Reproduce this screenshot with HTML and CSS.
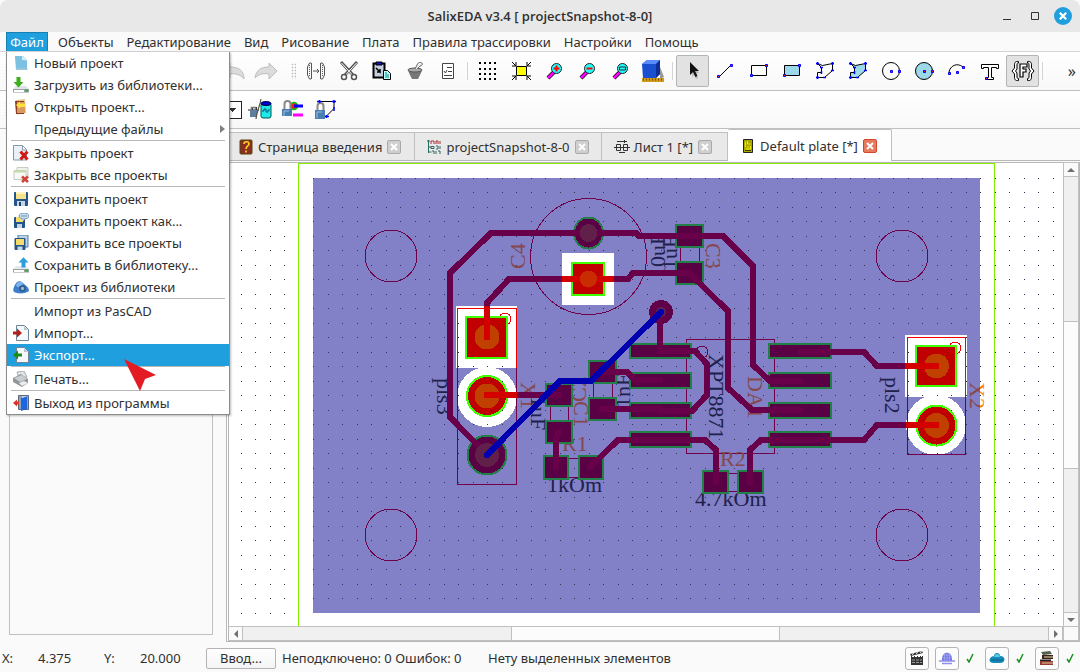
FILE: index.html
```html
<!DOCTYPE html>
<html lang="ru">
<head>
<meta charset="utf-8">
<title>SalixEDA</title>
<link rel="stylesheet" href="styles.css">
</head>
<body>
<div class="window">
  <header class="titlebar">
    <h1 class="title">SalixEDA v3.4 [ projectSnapshot-8-0]</h1>
    <div class="window-buttons">
      <button class="winbtn" aria-label="Свернуть"><svg width="18" height="18"><path d="M5 12.5h8" stroke="#333" stroke-width="1"/></svg></button>
      <button class="winbtn" aria-label="Развернуть"><svg width="18" height="18"><path d="M5.5 5.500h7v7h-7z" fill="none" stroke="#333"/></svg></button>
      <button class="winbtn" aria-label="Закрыть"><svg width="18" height="18"><circle cx="9" cy="9" r="9" fill="#209fdf"/><path d="M5.800 5.800l6.400 6.400M12.200 5.800l-6.400 6.400" stroke="#fff" stroke-width="2.200"/></svg></button>
    </div>
  </header>

  <nav class="menubar">
    <div class="menu-holder">
      <button class="menu-title open">Файл</button>
      <div class="dropdown">
        <button class="item"><svg class="ico" viewBox="0 0 16 16"><path d="M2 1h8l4 4v9H4z" fill="#9fd0ea"/><path d="M2 1h7v4l5 1v9H3z" fill="#7cc0e2"/><path d="M9 1v4h5z" fill="#d6eefa"/><path d="M3 14h12" stroke="#b8cdd8"/></svg><span>Новый проект</span></button>
        <button class="item"><svg class="ico" viewBox="0 0 16 16"><path d="M0 12l3-3h10l3 3v3.500H0z" fill="#dfe3e6"/><path d="M0 12h16v3.500H0z" fill="#9aa2a6"/><path d="M1 13h10v2H1z" fill="#fff"/><path d="M3.500 0h4v5h3L5.500 10.500.500 5h3z" fill="#3fae1c"/><path d="M12 13.500h3" stroke="#34b32a" stroke-width="2"/></svg><span>Загрузить из библиотеки...</span></button>
        <button class="item"><svg class="ico" viewBox="0 0 16 16"><path d="M3 1l9-1 1 14-9 1.500z" fill="#e6c78e"/><path d="M2 2h9v13H3z" fill="#8b3a26"/><path d="M4 3h8v11H4z" fill="#d99a5a"/><path d="M3 6l4-3.500v2h5v3.500H7v2z" fill="#ffe03a"/></svg><span>Открыть проект...</span></button>
        <button class="item"><span class="ico"></span><span>Предыдущие файлы</span><svg class="sub" viewBox="0 0 5 8"><path d="M0 0l5 4-5 4z" fill="#808080"/></svg></button>
        <hr>
        <button class="item"><svg class="ico" viewBox="0 0 16 16"><path d="M.5.5h9l4 4v10.500H.5z" fill="#e9f0f7" stroke="#8397ab"/><path d="M9.500 1v4h4" fill="#fff" stroke="#8397ab"/><path d="M7.500 6.500l7 8M14.500 6.500l-7 8" stroke="#d31b14" stroke-width="3"/></svg><span>Закрыть проект</span></button>
        <button class="item"><svg class="ico" viewBox="0 0 16 16"><path d="M4 .5h11v10H4z" fill="#eef2ea" stroke="#c4cbbf"/><path d="M1 3.500h12v9H1z" fill="#f8f8f4" stroke="#c6cbc0"/><path d="M1 3.500h12v2H1z" fill="#c5dca8"/><path d="M9 9.500l6 5.500M15 9.500l-6 5.500" stroke="#cf4438" stroke-width="2.600"/></svg><span>Закрыть все проекты</span></button>
        <hr>
        <button class="item"><svg class="ico" viewBox="0 0 16 16"><rect x="1" y="1" width="14" height="14" rx="1" fill="#23558c"/><path d="M3 1h10v7H3z" fill="#f6e28a"/><path d="M3 1h10v2H3z" fill="#fff4bf"/><path d="M4 10h8v5H4z" fill="#c9d6e2"/><path d="M6 11h2v4H6z" fill="#1d4472"/></svg><span>Сохранить проект</span></button>
        <button class="item"><svg class="ico" viewBox="0 0 16 16"><rect x="1" y="4" width="11" height="11" rx="1" fill="#23558c"/><path d="M3 4h7v5H3z" fill="#f6dc6a"/><path d="M4 11h5v4H4z" fill="#c9d6e2"/><ellipse cx="11" cy="3" rx="5" ry="3" fill="#c7dff0" stroke="#6d95b5"/><path d="M9 5.500h3l-2 3z" fill="#a9cbe3"/><path d="M8.500 3h5" stroke="#245" stroke-dasharray="1 1"/></svg><span>Сохранить проект как...</span></button>
        <button class="item"><svg class="ico" viewBox="0 0 16 16"><path d="M5 0h10v12H5z" fill="#bcd3e6" stroke="#4d7aa5"/><rect x="1.500" y="3" width="11" height="12" rx="1" fill="#23558c"/><path d="M3 4h8v6H3z" fill="#f6dc6a"/><path d="M4.500 11.500h5V15h-5z" fill="#c9d6e2"/></svg><span>Сохранить все проекты</span></button>
        <button class="item"><svg class="ico" viewBox="0 0 16 16"><path d="M0 12l3-3h10l3 3v3.500H0z" fill="#e6e9eb"/><path d="M0 12h16v3.500H0z" fill="#9aa2a6"/><path d="M1 13h10v2H1z" fill="#fff"/><path d="M8.500 10.500h4v-5h3L10.500.300 5.500 5.500h3z" fill="#2b9fdc"/><path d="M12 13.500h3" stroke="#34b32a" stroke-width="2"/></svg><span>Сохранить в библиотеку...</span></button>
        <button class="item"><svg class="ico" viewBox="0 0 16 16"><path d="M1 8c2-6 6-7 9-4s6 4 6 8c-3 3-12 3-15 1-1-1-1-3 0-5z" fill="#3d7fcb"/><path d="M3 6c2-4 5-4 7-2 1 2-4 4-6 4z" fill="#7fb3ea"/><circle cx="9.500" cy="9.500" r="2.500" fill="#a3b3c4" stroke="#28588f" stroke-width="1.500"/></svg><span>Проект из библиотеки</span></button>
        <hr>
        <button class="item"><span class="ico"></span><span>Импорт из PasCAD</span></button>
        <button class="item"><svg class="ico" viewBox="0 0 16 16"><path d="M3.500.500h8l4 4v11h-12z" fill="#f4f8fb" stroke="#6f8496"/><path d="M11 1v4h4z" fill="#b6c6d4"/><path d="M0 6.500h4v-3L9 8l-5 4.500v-3H0z" fill="#b3221a"/></svg><span>Импорт...</span></button>
        <button class="item selected"><svg class="ico" viewBox="0 0 16 16"><path d="M3.500.500h8l4 4v11h-12z" fill="#f4f8fb" stroke="#6f8496"/><path d="M11 1v4h4z" fill="#b6c6d4"/><path d="M9 6.500H5v-3L0 8l5 4.500v-3h4z" fill="#1d8a1d"/></svg><span>Экспорт...</span></button>
        <hr>
        <button class="item"><svg class="ico" viewBox="0 0 16 16"><path d="M4 1l7-1 3 6-8 2z" fill="#dfe4e8" stroke="#8b9298" stroke-width=".7"/><path d="M0 7l8-4 7 5v4l-6 4-9-5z" fill="#8f9599"/><path d="M1 7l8-3 5 4-7 3z" fill="#c8cdd0"/><path d="M6 12l5-2 4 2-6 3z" fill="#eee"/></svg><span>Печать...</span></button>
        <hr>
        <button class="item"><svg class="ico" viewBox="0 0 16 16"><path d="M5.500.500h10v14h-10z" fill="#8fa3b5" stroke="#56697c"/><path d="M14 1L8 3v13l6-2z" fill="#1d66e0"/><path d="M15 1h-6v2" fill="#cfd9e2"/><path d="M6 6.500H4v-2L0 8l4 3.500v-2h2z" fill="#d8352b"/></svg><span>Выход из программы</span></button>
      </div>
      <svg class="pointer" viewBox="0 0 32 32"><path d="M0 0L32 16 21 20 16 32z" fill="#e31b23"/></svg>
    </div>
    <button class="menu-title">Объекты</button>
    <button class="menu-title">Редактирование</button>
    <button class="menu-title">Вид</button>
    <button class="menu-title">Рисование</button>
    <button class="menu-title">Плата</button>
    <button class="menu-title">Правила трассировки</button>
    <button class="menu-title">Настройки</button>
    <button class="menu-title">Помощь</button>
  </nav>

  <div class="toolbar">
    <span class="grip"></span>
    <div class="tools history">
      <button class="tool" aria-label="Отменить"><svg viewBox="0 0 24 24"><path d="M1 11l8-7v4c8 0 14 3 14 12-3-4-8-6-14-5v4z" fill="#dcdcdc" stroke="#bdbdbd"/></svg></button>
      <button class="tool" aria-label="Повторить"><svg viewBox="0 0 24 24"><path d="M23 12l-8-8v4C7 8 2 11 1 19c4-4 8-5 14-4v5z" fill="#dcdcdc" stroke="#bdbdbd"/></svg></button>
    </div>
    <span class="grip"></span>
    <div class="tools edit">
      <button class="tool" aria-label="Зеркало"><svg viewBox="0 0 24 24"><path d="M7.500 4v16M16.500 4v16M7 4H5.500L3.500 8v8l2 4H7M17 4h1.500l2 4v8l-2 4H17M9 12h6M13 10l2 2-2 2" fill="none" stroke="#555"/><path d="M5.500 6v12M18.500 6v12" stroke="#555" stroke-dasharray="1 1"/></svg></button>
      <button class="tool" aria-label="Вырезать"><svg viewBox="0 0 24 24"><path d="M4 3l12 13M20 3L8 16" stroke="#555" stroke-width="3"/><path d="M4.500 4l11 12M19.500 4l-11 12" stroke="#fff"/><circle cx="7" cy="18" r="2.500" fill="#fff" stroke="#555" stroke-width="1.500"/><circle cx="17" cy="18" r="2.500" fill="#fff" stroke="#555" stroke-width="1.500"/></svg></button>
      <button class="tool" aria-label="Вставить"><svg viewBox="0 0 24 24"><path d="M3.500 4.500h11v14h-11z" fill="#c3cede" stroke="#000" stroke-width="2"/><path d="M6 3h6v3H6z" fill="#1414b4" stroke="#000"/><path d="M6 9l4 4v-3m0 3H7" stroke="#000" stroke-width="1.500" fill="none"/><path d="M13.500 11.500h4l3 3v6h-7z" fill="#bff" stroke="#000"/><path d="M15 14h2M15 16h4M15 18h4" stroke="#088"/></svg></button>
      <button class="tool" aria-label="Очистить"><svg viewBox="0 0 24 24"><path d="M5 11h14l-1 3-3 6H9l-3-6z" fill="#777"/><ellipse cx="12" cy="11" rx="7" ry="2" fill="#aaa" stroke="#555"/><path d="M12 10l2-4c1-3 4-3 5-2s0 3-2 3l-3 3" fill="#eee" stroke="#666"/></svg></button>
      <button class="tool" aria-label="Проверка"><svg viewBox="0 0 24 24"><path d="M6.500 4.500h11v15h-11z" fill="#fff" stroke="#444"/><path d="M11 8.500h5M8 12l1.500 2L11 11M12 12.500h4M8 16.500h8" stroke="#444" fill="none"/></svg></button>
    </div>
    <span class="divider"></span>
    <div class="tools">
      <button class="tool" aria-label="Сетка"><svg viewBox="0 0 24 24"><path d="M3 4h18M3 10h18M3 15h18M3 20h18" stroke="#000" stroke-width="2" stroke-dasharray="2 3"/></svg></button>
      <button class="tool" aria-label="Вписать"><svg viewBox="0 0 24 24"><path d="M7.500 7.500h10v9h-10z" fill="#ff0" stroke="#000"/><path d="M3 3l4 4M22 3l-4 4M3 21l4-4M22 21l-4-4M7 3v4H3M18 3v4h4M7 21v-4H3M18 21v-4h4" stroke="#000" fill="none"/></svg></button>
      <button class="tool" aria-label="Увеличить"><svg viewBox="0 0 24 24"><path d="M12 13l-6 6" stroke="#000" stroke-width="4"/><path d="M12 13l-6 6" stroke="#f0f" stroke-width="2.600"/><circle cx="14.500" cy="9.500" r="5" fill="#2ff" stroke="#222"/><path d="M14.500 6.500v6M11.500 9.500h6" stroke="#f00" stroke-width="2"/></svg></button>
      <button class="tool" aria-label="Уменьшить"><svg viewBox="0 0 24 24"><path d="M12 13l-6 6" stroke="#000" stroke-width="4"/><path d="M12 13l-6 6" stroke="#f0f" stroke-width="2.600"/><circle cx="14.500" cy="9.500" r="5" fill="#2ff" stroke="#222"/><path d="M11.500 9.500h6" stroke="#f00" stroke-width="2"/></svg></button>
      <button class="tool" aria-label="Окно"><svg viewBox="0 0 24 24"><path d="M12 13l-6 6" stroke="#000" stroke-width="4"/><path d="M12 13l-6 6" stroke="#f0f" stroke-width="2.600"/><circle cx="14.500" cy="9.500" r="5" fill="#2ff" stroke="#222"/><path d="M11.500 8h6v3h-6z" fill="none" stroke="#222"/></svg></button>
      <button class="tool" aria-label="3D вид"><svg viewBox="0 0 24 24"><path d="M19 8l4 10-4 2z" fill="#999"/><path d="M1 5l5-4h13v14l-4 4H2z" fill="#1a4fd0"/><path d="M1 5l5-4h13l-4 4z" fill="#5b8cff"/><path d="M19 1v14l-4 4V5z" fill="#0c2f95"/><path d="M1 19h22v4H1z" fill="#d29a1c"/><path d="M2 20.500h20" stroke="#7a5200" stroke-width="2" stroke-dasharray="1 2"/></svg></button>
    </div>
    <span class="divider"></span>
    <div class="tools">
      <button class="tool active" aria-label="Выбор"><svg viewBox="0 0 24 24"><path d="M11 6l7 8-3 1 2 4-2 1-2-4-2 2z" fill="#bbb"/><path d="M9 3v13l3-3 2.500 5 2-1-2.500-5h4z" fill="#111"/></svg></button>
      <button class="tool" aria-label="Линия"><svg viewBox="0 0 24 24"><path d="M5 18L17 6" stroke="#000"/><path d="M3.500 16.500h2v2h-2zM16.500 5.500h2v2h-2z" fill="#f22" stroke="#00f"/></svg></button>
      <button class="tool" aria-label="Прямоугольник"><svg viewBox="0 0 24 24"><path d="M4.500 6.500h15v10h-15z" fill="none" stroke="#000"/><path d="M3.500 15.500h2v2h-2zM18.500 5.500h2v2h-2z" fill="#f22" stroke="#00f"/></svg></button>
      <button class="tool" aria-label="Заливка"><svg viewBox="0 0 24 24"><path d="M4.500 6.500h15v10h-15z" fill="#9bd9ea" stroke="#000"/><path d="M3.500 15.500h2v2h-2zM18.500 5.500h2v2h-2z" fill="#f22" stroke="#00f"/></svg></button>
      <button class="tool" aria-label="Полилиния"><svg viewBox="0 0 24 24"><path d="M4.500 4.500l5 2 10-2v7l-8 7h-7v-5h4v-5z" fill="none" stroke="#000"/><path d="M3 4.500h3M4.500 3v3M18 4.500h3M19.500 3v3M18 11.500h3M3 18.500h3M4.500 17v3M10 18.500h3M7 8.500h3M8.500 12v3" stroke="#00f" stroke-width="1.500"/></svg></button>
      <button class="tool" aria-label="Полигон"><svg viewBox="0 0 24 24"><path d="M4.500 4.500l5 2 10-2v7l-8 7h-7v-5h4v-5z" fill="#9bd9ea" stroke="#000"/><path d="M3 4.500h3M4.500 3v3M18 4.500h3M19.500 3v3M18 11.500h3M3 18.500h3M4.500 17v3M10 18.500h3M7 8.500h3M8.500 12v3" stroke="#00f" stroke-width="1.500"/></svg></button>
      <button class="tool" aria-label="Окружность"><svg viewBox="0 0 24 24"><circle cx="12" cy="12" r="8.500" fill="none" stroke="#000"/><path d="M11.500 11.500h2v2h-2zM19.500 11.500h2v2h-2z" fill="#f22" stroke="#00f"/></svg></button>
      <button class="tool" aria-label="Круг"><svg viewBox="0 0 24 24"><circle cx="12" cy="12" r="8.500" fill="#9bd9ea" stroke="#000"/><path d="M11.500 11.500h2v2h-2zM19.500 11.500h2v2h-2z" fill="#f22" stroke="#00f"/></svg></button>
      <button class="tool" aria-label="Дуга"><svg viewBox="0 0 24 24"><path d="M4 13C5 7 12 3 18 8" fill="none" stroke="#000"/><path d="M3.500 13.500h2v2h-2zM11.500 12.500h2v2h-2zM17.500 7.500h2v2h-2z" fill="#f22" stroke="#00f"/></svg></button>
      <button class="tool" aria-label="Текст"><svg viewBox="0 0 24 24"><path d="M3.500 5.500h17v4h-2v-1h-5v10h2v2h-7v-2h2v-10h-5v1h-2z" fill="#fff" stroke="#000"/><path d="M7.500 18.500h2v2h-2z" fill="#f22" stroke="#00f"/></svg></button>
      <button class="tool active" aria-label="Фрагмент"><svg viewBox="0 0 24 24"><path d="M7.500 2.500C4 2 3.500 4 3.500 6v3L1 12l2.500 3v3c0 2 .5 4 4 3.500v-2C6 19.500 6 19 6 17v-3l-1.500-2L6 10V6c0-1.500 0-2 1.500-2zM16.500 2.500C20 2 20.500 4 20.500 6v3l2.500 3-2.500 3v3c0 2-.5 4-4 3.500v-2C18 19.500 18 19 18 17v-3l1.500-2L18 10V6c0-1.500 0-2-1.500-2z" fill="#fff" stroke="#000"/><path d="M9 5h7v3h-4v2h3v3h-3v5H9z" fill="#fff" stroke="#000" stroke-width="1.200"/></svg></button>
    </div>
    <span class="divider"></span>
    <button class="more">»</button>
  </div>

  <div class="toolbar second">
    <span class="grip"></span>
    <select class="layer" aria-label="Слой"><option></option></select>
    <button class="tool" aria-label="Блокировка деталей"><svg viewBox="0 0 24 24"><path d="M0 12h11M4.500 9v6M8.500 9v6" stroke="#222"/><path d="M2 12h7v7H2z" fill="#5c7f9e"/><path d="M3.500 12V9.500h4V12" fill="none" stroke="#777" stroke-width="1.500"/><path d="M8 21C9 12 12 8 13 1" stroke="#554" fill="none" stroke-width="1.200"/><rect x="13" y="5" width="10" height="15" rx="2" fill="#1fe8e8" stroke="#055"/><ellipse cx="18" cy="5.500" rx="5" ry="2" fill="#0000d8" stroke="#003"/><path d="M14 13h2v-2h2v3h2v-2h2" stroke="#057" fill="none"/></svg></button>
    <button class="tool" aria-label="Блокировка цепей"><svg viewBox="0 0 24 24"><circle cx="13" cy="8" r="3.500" fill="#f02020" stroke="#0c0" stroke-width="1.500"/><path d="M13 8h9" stroke="#00f" stroke-width="3"/><path d="M12 17h10" stroke="#f0f" stroke-width="3"/><path d="M3.500 11V6c0-4 6-4 6 0v5" fill="none" stroke="#888" stroke-width="2"/><path d="M1 11h10v7H1z" fill="#4a7db0"/><path d="M3 18v-5h5" stroke="#9cc0e0" fill="none"/></svg></button>
    <button class="tool" aria-label="Блокировка полигонов"><svg viewBox="0 0 24 24"><path d="M5 3.500h15v7l-8 8" fill="none" stroke="#000"/><path d="M3.500 12V8c0-4 6-4 6 0v4" fill="none" stroke="#888" stroke-width="2"/><path d="M1 12h10v9H1z" fill="#4a7db0"/><path d="M3 20v-6h5" stroke="#9cc0e0" fill="none"/><path d="M3 3.500h4M5.500 2v3M18 3.500h4M20 2v3M20 9v4M11 18.500h4M12.500 17v3" stroke="#00f" stroke-width="1.500"/></svg></button>
  </div>

  <main class="workspace">
    <aside class="side"><div class="side-box"></div></aside>
    <section class="document">
      <div class="tabs">
        <div class="tab intro"><svg viewBox="0 0 16 16"><rect x="2" y="1" width="12" height="14" rx="1" fill="#8b2e20" stroke="#541"/><path d="M6 5c0-3 5-3 5 0 0 2-3 2-3 5M8 11.500v2" stroke="#ffd21e" stroke-width="1.600" fill="none"/></svg><span class="tab-label">Страница введения</span><button class="close" aria-label="Закрыть вкладку"><svg viewBox="0 0 8 8"><path d="M1 1l6 6M7 1L1 7" stroke="#fff" stroke-width="2"/></svg></button></div>
        <div class="tab project"><svg viewBox="0 0 16 16"><path d="M1 2h3M2.500 1v13M2.500 8h3M2.500 13h3" stroke="#2a6a5a" fill="none"/><path d="M5 2h3v3M5 2v3M10 5V2h2v3M14 2v3" stroke="#a33" fill="none"/><path d="M5 7.500h3v2H5zM10 7h2v3h-2M14 7v3M6 12h2v3M10 12v3M12 12h2v3" stroke="#366" fill="none"/></svg><span class="tab-label">projectSnapshot-8-0</span><button class="close" aria-label="Закрыть вкладку"><svg viewBox="0 0 8 8"><path d="M1 1l6 6M7 1L1 7" stroke="#fff" stroke-width="2"/></svg></button></div>
        <div class="tab"><svg viewBox="0 0 16 16"><path d="M0 8.500h16M3 2.500h10M10.500 1v3" stroke="#333"/><path d="M2.500 5.500h4v6h-4zM9.500 5.500h4v6h-4zM5 13.500h6" fill="none" stroke="#333"/></svg><span class="tab-label">Лист 1 [*]</span><button class="close" aria-label="Закрыть вкладку"><svg viewBox="0 0 8 8"><path d="M1 1l6 6M7 1L1 7" stroke="#fff" stroke-width="2"/></svg></button></div>
        <div class="tab current"><svg viewBox="0 0 16 16"><path d="M3.500 1.500h9v13h-9z" fill="#a8a800" stroke="#222"/><path d="M5.500 4v5M7.500 3v3h3M10.500 8v3h-5M8 8v2" stroke="#ee0" fill="none"/><path d="M5 12.500h6" stroke="#440"/></svg><span class="tab-label">Default plate [*]</span><button class="close" aria-label="Закрыть вкладку"><svg viewBox="0 0 8 8"><path d="M1 1l6 6M7 1L1 7" stroke="#fff" stroke-width="2"/></svg></button></div>
      </div>
      <div class="frame">
        <div class="view">
          <svg class="board" width="100%" height="100%">
            <defs>
              <pattern id="dots" x="313" y="178" width="29" height="29" patternUnits="userSpaceOnUse">
                <path d="M0 0h1v1H0zM15 0h1v1h-1zM0 14h1v1H0zM15 14h1v1h-1z" fill="#303050"/>
              </pattern>
              <linearGradient id="edge" gradientUnits="userSpaceOnUse" x1="0" y1="-20" x2="0" y2="0">
                <stop offset=".5" stop-color="#ff8000"/><stop offset=".5" stop-color="#84484e"/>
              </linearGradient>
            </defs>
            <g transform="translate(-229 -163)">
              <path d="M298.500 700V163.500h696V700" fill="none" stroke="#80f000"/>
              <rect x="313" y="178" width="667" height="435" fill="#8280c6"/>
              <g fill="#fff">
                <rect x="562" y="253" width="52" height="52"/>
                <rect x="456" y="306" width="61" height="62"/><circle cx="487" cy="397" r="30"/>
                <rect x="905" y="335" width="62" height="62"/><circle cx="936" cy="425" r="30"/>
              </g>
              <path d="M229 164h69v470h-69zM313 178h668v435H313zM995 164h80v470h-80z" fill="url(#dots)"/>

              <g class="outline">
                <circle cx="391" cy="256" r="26"/><circle cx="902" cy="256" r="26"/>
                <circle cx="391" cy="535" r="26"/><circle cx="902" cy="535" r="26"/>
                <circle cx="588.500" cy="256.500" r="58"/>
                <path d="M457.500 368v116.500h59V368M907.500 397v57.500h58V397M680.500 247v15M699.500 247v15M550.500 406v15M568.500 406v15M593.500 383v15M612.500 383v15M568 458.500h11M568 477.500h11M728 473.500h9M728 491.500h9M686.500 339.500h88v114h-88z"/>
                <circle cx="702" cy="352" r="6"/>
              </g>
              <g class="outline red">
                <path d="M457.500 368v-59.500h59V368M907.500 397v-59.500h58V397"/>
                <circle cx="505" cy="319" r="6"/><circle cx="955" cy="348" r="6"/>
              </g>

              <g class="ref">
                <text transform="translate(525 269) rotate(-90)">C4</text>
                <text transform="translate(706 243) rotate(90)">C3</text>
                <text transform="translate(521 382) rotate(90)">X1</text>
                <text transform="translate(586 402) rotate(-90)">C2</text>
                <text transform="translate(574 401) rotate(90)">C1</text>
                <text transform="translate(748 376) rotate(90)">DA1</text>
                <text x="562" y="451">R1</text>
                <text x="720" y="466">R2</text>
              </g>
              <text fill="url(#edge)" transform="translate(970 382) rotate(90)">X2</text>
              <g class="value">
                <text transform="translate(665 278) rotate(-90)">10uF</text>
                <text transform="translate(677 270) rotate(-90)">1uF</text>
                <text transform="translate(437 378) rotate(90)">pls3</text>
                <text transform="translate(885 377) rotate(90)">pls2</text>
                <text transform="translate(531 396) rotate(90)">1uF</text>
                <text transform="translate(630 408) rotate(-90)">1nF</text>
                <text transform="translate(709 354) rotate(90)">XPT8871</text>
                <text x="547" y="492">1kOm</text>
                <text x="695" y="506">4.7kOm</text>
              </g>

              <g class="pad">
                <ellipse cx="588.500" cy="233" rx="14.500" ry="15.500"/><circle cx="487" cy="455" r="19.500"/>
                <rect x="676" y="225" width="27" height="22"/><rect x="676" y="262" width="27" height="22"/>
                <rect x="546" y="384" width="26" height="22"/><rect x="546" y="421" width="26" height="22"/>
                <rect x="589" y="361" width="27" height="22"/><rect x="589" y="398" width="27" height="22"/>
                <rect x="544" y="456" width="24" height="23"/><rect x="579" y="456" width="24" height="23"/>
                <rect x="703" y="471" width="25" height="22"/><rect x="738" y="471" width="25" height="22"/>
                <rect x="630" y="344" width="61" height="14"/><rect x="630" y="373" width="61" height="15"/>
                <rect x="630" y="403" width="61" height="15"/><rect x="630" y="432" width="61" height="15"/>
                <rect x="769" y="344" width="62" height="14"/><rect x="769" y="373" width="62" height="15"/>
                <rect x="769" y="403" width="62" height="15"/><rect x="769" y="432" width="62" height="15"/>
              </g>
              <g class="pad live">
                <rect x="572" y="263" width="32" height="32"/>
                <rect x="466" y="317" width="41" height="41"/><circle cx="487" cy="396" r="20"/>
                <rect x="916" y="346" width="40" height="40"/><circle cx="936.500" cy="425.500" r="20"/>
              </g>
              <circle cx="661" cy="312" r="12" fill="#600048"/>

              <g class="trace">
                <path d="M588 233h-97l-41 40v144l37 38"/>
                <path d="M588 233h48l3 3h84l30 30v99l17 16h30"/>
                <path d="M487 337v-34l22-24h119l5-6h56l39 38v77l24 22h48"/>
                <path d="M487 395h72M660 312v39h35l12 13v31l-15 16h-32M602 372h25l8 8h25M602 409h58"/>
                <path d="M559 432l-3 5v30M590 467l28-27h87l11 10v32M750 482v-32l11-10h103l13-15h59M800 352h64l13 14h59"/>
              </g>
              <g fill="#60204a">
                <circle cx="588.500" cy="233" r="9"/><circle cx="487" cy="455" r="12"/><circle cx="661" cy="312" r="5"/>
              </g>
              <g fill="#c04000">
                <circle cx="487" cy="337" r="12.500"/><circle cx="487" cy="396" r="12.500"/>
                <circle cx="936.500" cy="366" r="12.500"/><circle cx="936.500" cy="425.500" r="12.500"/>
              </g>
              <path class="hot" d="M562 279h52M487 306v34M484 395h33M905 366h34M906 425h33"/>
              <circle cx="588.500" cy="279" r="8.500" fill="#c82c00"/>
              <path d="M661 312l-70 69h-31l-73 74" class="via-link"/>
            </g>
          </svg>
        </div>
        <div class="vbar">
          <button class="arrow" aria-label="Вверх"><svg viewBox="0 0 8 8"><path d="M0 6l4-4 4 4z"/></svg></button>
          <div class="groove"><div class="thumb"></div></div>
          <button class="arrow" aria-label="Вниз"><svg viewBox="0 0 8 8"><path d="M0 2l4 4 4-4z"/></svg></button>
        </div>
        <div class="hbar">
          <button class="arrow" aria-label="Влево"><svg viewBox="0 0 8 8"><path d="M6 0L2 4l4 4z"/></svg></button>
          <div class="groove"><div class="thumb"></div></div>
          <button class="arrow" aria-label="Вправо"><svg viewBox="0 0 8 8"><path d="M2 0l4 4-4 4z"/></svg></button>
        </div>
        <div class="corner"></div>
      </div>
    </section>
  </main>

  <footer class="status">
    <span class="axis">X:</span><span class="coord">4.375</span>
    <span class="axis">Y:</span><span class="coord">20.000</span>
    <button class="enter">Ввод...</button>
    <span class="connections">Неподключено: 0 Ошибок: 0</span>
    <span class="selection">Нету выделенных элементов</span>
    <div class="status-tools">
      <button class="stool" aria-label="Видео"><svg viewBox="0 0 16 16"><path d="M2 6h12v9H2z" fill="#333"/><path d="M1 4l12-3 1 2L2 6z" fill="#333"/><path d="M3 4.500l2-1M7 3.500l2-1M11 2.500l2-1M3 6.500h10" stroke="#fff" stroke-dasharray="2 1"/><path d="M3 10h10M3 12.500h10" stroke="#999" stroke-dasharray="3 1"/></svg></button>
      <button class="stool" aria-label="Сеть"><svg viewBox="0 0 16 16"><path d="M3 11C2 0 14 0 13 11z" fill="#6f74e0"/><path d="M4 5h8M3 8h10M8 2v9M5.500 3v8M10.500 3v8" stroke="#a9acf4" stroke-width=".7"/><path d="M0 11h16M3 13.500h10" stroke="#8d91ea" stroke-width="1.500"/></svg></button>
      <svg class="check" viewBox="0 0 10 10"><path d="M2 6l2 3L8 1" fill="none" stroke="#18901c" stroke-width="1.500"/></svg>
      <button class="stool" aria-label="Облако"><svg viewBox="0 0 16 16"><path d="M5 6c0-4 6-4 6 0 6 0 6 7 0 7H5c-6 0-6-6 0-7z" fill="#128ab5"/><path d="M5 7c1-4 5-4 6 0z" fill="#5cc8e6"/><path d="M2 10h12" stroke="#0b6288"/></svg></button>
      <svg class="check" viewBox="0 0 10 10"><path d="M2 6l2 3L8 1" fill="none" stroke="#18901c" stroke-width="1.500"/></svg>
      <button class="stool" aria-label="Библиотека"><svg viewBox="0 0 16 16"><path d="M2 2l9-1 2 3-9 1z" fill="#55604a"/><path d="M3 5h11v4H3z" fill="#3a2218"/><path d="M5 7h9" stroke="#e8dcb8"/><path d="M1 9.500h11v1.500H1z" fill="#222"/><path d="M1 11h13v4H1z" fill="#963a2e"/><path d="M3 13h11" stroke="#e6c8a0"/></svg></button>
      <svg class="check" viewBox="0 0 10 10"><path d="M2 6l2 3L8 1" fill="none" stroke="#18901c" stroke-width="1.500"/></svg>
    </div>
  </footer>
</div>
</body>
</html>
```

FILE: styles.css
```css
* { box-sizing: border-box; }
body {
  margin: 0;
  font: 13px/18px "Noto Sans", "Open Sans", sans-serif;
  color: #303030;
  background: #fafafa;
}
button { font: inherit; color: inherit; background: none; border: 0; padding: 0; margin: 0; }
svg { display: block; }
.window { display: flex; flex-direction: column; height: 100vh; overflow: hidden; }

.titlebar { display: grid; grid-template-columns: 1fr auto 1fr; align-items: center; height: 32px; background: #e8e8e8; border-radius: 8px 8px 0 0; flex: none; }
.title { grid-column: 2; margin: 0; font: 600 13px/18px "Open Sans", sans-serif; }
.window-buttons { display: flex; gap: 10px; justify-content: flex-end; padding-right: 8px; }

.menubar { display: flex; flex: none; height: 20px; padding-left: 6px; border-bottom: 1px solid #d4d4d4; background: #fafafa; }
.menu-title { height: 19px; line-height: 18px; padding: 0 6px; white-space: nowrap; }
.menu-title + .menu-title { margin-left: 1px; }
.menu-title.open { width: 42px; padding: 0; color: #fff; background: #209fdf; border: 1px solid #187fb2; border-bottom: 0; }
.menu-holder { position: relative; margin-right: 4px; }
.dropdown { position: absolute; z-index: 5; top: 20px; left: 0; width: 224px; background: #fff; border: 1px solid #8c8c8c; border-top: 0; box-shadow: 1px 1px 2px #0004; }
.item { display: flex; align-items: center; width: 100%; height: 22px; padding-left: 6px; text-align: left; }
.item span:not(.ico) { flex: 1; }
.ico { width: 16px; height: 16px; margin-right: 5px; flex: none; }
.sub { width: 5px; height: 8px; margin-right: 4px; }
.selected { background: #209fdf; color: #fff; }
.dropdown hr { margin: 0 4px; height: 2px; border: 0; border-top: 1px solid #b8b8b8; }
.pointer { position: absolute; z-index: 6; left: 118px; top: 327px; width: 32px; height: 32px; }

.toolbar { display: flex; align-items: center; flex: none; height: 39px; padding-left: 5px; background: linear-gradient(#fff, #f8f8f8); border-bottom: 1px solid #c0c0c0; }
.toolbar.second { height: 38px; }
.grip { width: 5px; height: 16px; flex: none; background: radial-gradient(circle, #bbb 40%, #0000 50%) 0 0 / 3px 3px; }
.tools { display: flex; }
.history { margin: 0 9px 0 206px; }
.edit { margin-left: 3px; }
.tool { display: grid; place-items: center; width: 33px; height: 32px; flex: none; }
.tool svg { width: 24px; height: 24px; }
.tool.active { background: #e2e2e2; border: 1px solid #b4b4b4; border-radius: 2px; }
.divider { width: 1px; height: 18px; margin: 0 3px; background: #d4d4d4; flex: none; }
.more { margin-left: auto; padding-right: 4px; font-size: 16px; }
.layer { appearance: none; width: 100px; height: 18px; margin: 0 1px 0 132px; border: 1px solid #222; border-radius: 0; background: conic-gradient(from -45deg at 50% 100%, #333 90deg, #0000 0) right 5px center / 8px 4px no-repeat #fff; }

.workspace { display: flex; flex: 1; min-height: 0; }
.side { width: 226px; padding: 10px 13px 7px 9px; flex: none; }
.side-box { height: 100%; border: 1px solid #c0c0c0; }
.document { display: flex; flex-direction: column; flex: 1; min-width: 0; }
.tabs { display: flex; align-items: flex-end; height: 32px; flex: none; border-bottom: 1px solid #b8b8b8; }
.tab { display: flex; align-items: center; height: 28px; padding: 0 15px 0 12px; background: #e9e9e9; border: 1px solid #c0c0c0; border-bottom: 0; border-left: 0; white-space: nowrap; }
.tab > svg { width: 16px; height: 16px; margin-right: 4px; }
.tab.intro { padding-right: 13px; }
.tab.project { padding: 0 12px 0 11px; }
.tab-label { margin-right: 5px; }
.tab.current { height: 32px; margin-bottom: -1px; padding-right: 14px; background: #fff; border-radius: 2px 2px 0 0; }
.close { display: grid; place-items: center; width: 14px; height: 14px; background: #cfcfcf; border: 1px solid #aaa; border-radius: 2px; }
.close svg { width: 8px; height: 8px; }
.current .close { background: #e57a5c; border-color: #d8452e; }

.frame { display: grid; grid-template: minmax(0, 1fr) 15px / minmax(0, 1fr) 16px; flex: 1; min-height: 0; margin-top: 1px; border: 1px solid #b8b8b8; border-top: 0; border-left: 3px double #b8b8b8; background: #fff; }
.view { overflow: hidden; border-top: 1px solid #b8b8b8; }
.board { shape-rendering: crispEdges; }
.board text { font: 22px "Liberation Serif", serif; }
.outline { fill: none; stroke: #700048; }
.outline.red { stroke: #f00000; }
.ref { fill: #84484e; }
.value { fill: #20204c; }
.pad { fill: #5a0044; stroke: #208048; stroke-width: 2px; }
.pad.live { fill: #c00000; stroke: #40ff00; }
.trace { fill: none; stroke: #68004a; stroke-width: 6px; stroke-linejoin: round; stroke-linecap: round; }
.hot { fill: none; stroke: #d40000; stroke-width: 6px; }
.via-link { fill: none; stroke: #0000b0; stroke-width: 6px; stroke-linecap: round; }

.vbar, .hbar { display: flex; background: #f0f0f0; border: 1px solid #c0c0c0; }
.vbar { flex-direction: column; border-bottom: 0; }
.hbar { border-left: 0; }
.arrow { display: grid; place-items: center; width: 14px; height: 13px; flex: none; background: #fafafa; }
.hbar .arrow { width: 13px; }
.arrow svg { width: 8px; height: 8px; fill: #707070; }
.groove { display: flex; flex: 1; }
.vbar .groove { flex-direction: column; }
.thumb { background: #fcfcfc; border: 1px solid #c0c0c0; }
.hbar .groove { border: 1px solid #c0c0c0; border-width: 0 1px; }
.vbar .groove { border: 1px solid #c0c0c0; border-width: 1px 0; }
.hbar .thumb { margin-left: 33.300%; width: 33.400%; border-width: 0 1px; }
.vbar .thumb { flex: none; height: 148px; margin: 144px 0 0; border-width: 1px 0; }
.corner { border: 1px solid #c0c0c0; background: #fafafa; }

.status { display: flex; align-items: center; flex: none; height: 30px; padding: 2px 5px 0 2px; white-space: nowrap; }
.axis { width: 36px; }
.coord { width: 66px; }
.enter { width: 70px; height: 21px; margin-right: 6px; border: 1px solid #b4b4b4; border-radius: 2px; background: linear-gradient(#fff, #f4f4f4); }
.connections { width: 206px; }
.status-tools { display: flex; align-items: center; gap: 6px; margin-left: auto; }
.stool { display: grid; place-items: center; width: 24px; height: 23px; border: 1px solid #b4b4b4; border-radius: 3px; background: #fcfcfc; }
.stool svg { width: 16px; height: 16px; }
.check { width: 10px; height: 10px; margin-right: 4px; }
.check:last-child { margin-right: 0; }
```
